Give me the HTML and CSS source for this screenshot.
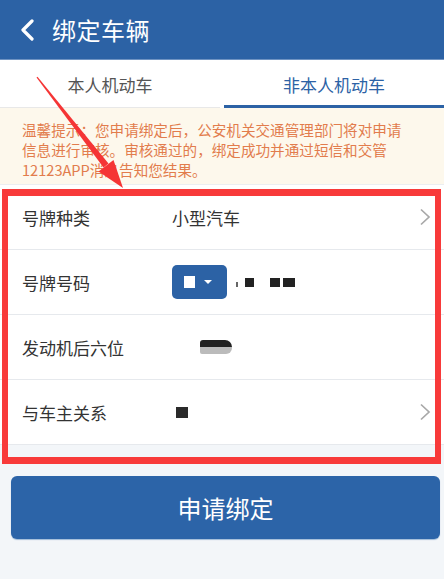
FILE: index.html
```html
<!DOCTYPE html>
<html lang="zh-CN">
<head>
<meta charset="utf-8">
<title>绑定车辆</title>
<link rel="stylesheet" href="styles.css">
</head>
<body>
<div class="page">
  <header class="topbar">
    <svg class="back" width="16" height="22" viewBox="0 0 16 22"><path d="M13 2 L4 11 L13 20" fill="none" stroke="#fff" stroke-width="3.2" stroke-linecap="round" stroke-linejoin="round"/></svg>
    <h1 class="title">绑定车辆</h1>
  </header>
  <nav class="tabs">
    <div class="tab">本人机动车</div>
    <div class="tab active">非本人机动车</div>
  </nav>
  <div class="notice">温馨提示：您申请绑定后，公安机关交通管理部门将对申请信息进行审核。审核通过的，绑定成功并通过短信和交管12123APP消息告知您结果。</div>
  <div class="form">
    <div class="row">
      <span class="label">号牌种类</span>
      <span class="value">小型汽车</span>
      <svg class="chev" width="12" height="18" viewBox="0 0 12 18"><path d="M2 1.5 L10 9 L2 16.5" fill="none" stroke="#a8a8a8" stroke-width="1.7"/></svg>
    </div>
    <div class="row">
      <span class="label">号牌号码</span>
      <span class="value plate-val">
        <span class="plate"><span class="plate-sq"></span><span class="caret"></span></span>
        <span class="mask m0"></span><span class="mask m1"></span><span class="mask m2"></span><span class="mask m3"></span>
      </span>
    </div>
    <div class="row">
      <span class="label">发动机后六位</span>
      <span class="value"><span class="blob"></span></span>
    </div>
    <div class="row">
      <span class="label">与车主关系</span>
      <span class="value"><span class="mask m4"></span></span>
      <svg class="chev" width="12" height="18" viewBox="0 0 12 18"><path d="M2 1.5 L10 9 L2 16.5" fill="none" stroke="#a8a8a8" stroke-width="1.7"/></svg>
    </div>
  </div>
  <div class="actions">
    <button class="submit">申请绑定</button>
  </div>
  <div class="redbox"></div>
  <svg class="arrow" width="444" height="579" viewBox="0 0 444 579">
    <polygon points="36.5,77.5 37.5,76.8 108.5,163.5 103.5,167.5" fill="#f53535"/>
    <polygon points="123,188 98.5,171.5 113.5,160" fill="#f53535"/>
  </svg>
</div>
</body>
</html>
```

FILE: styles.css
```css
* { box-sizing: border-box; margin: 0; padding: 0; }
html, body { width: 444px; height: 579px; overflow: hidden; }
body {
  background: #f3f6f9;
  font-family: "Noto Sans CJK SC", "Noto Sans", sans-serif;
}
.page { position: relative; width: 444px; height: 579px; }
.topbar {
  height: 60px;
  background: #2c62a5;
  display: flex;
  align-items: center;
  padding-left: 19px;
  border-bottom: 1px solid #6f93c2;
}
.back { margin-right: 17px; margin-top: 1px; }
.title {
  color: #fff;
  font-size: 24px;
  font-weight: 400;
  letter-spacing: 0.5px;
}
.tabs {
  display: flex;
  background: #fff;
  height: 48px;
}
.tab {
  flex: 1;
  display: flex;
  align-items: center;
  justify-content: center;
  font-size: 17px;
  color: #555;
  padding-top: 1px;
  border-bottom: 1px solid #e8e8e8;
}
.tab.active {
  color: #2c62a5;
  border-bottom: 3px solid #2c62a5;
  margin-left: 4px;
  padding-top: 3px;
}
.notice {
  background: #fdf8ec;
  color: #e27c4c;
  font-size: 14.6px;
  line-height: 20px;
  padding: 12px 30px 9px 22px;
  height: 77px;
  border-bottom: 1px solid #eceef0;
}
.form { background: #fff; }
.row {
  height: 65px;
  display: flex;
  align-items: center;
  padding: 0 13px 0 22px;
  border-bottom: 1px solid #e6e9ed;
}
.label {
  width: 150px;
  font-size: 17px;
  color: #333;
}
.value {
  flex: 1;
  font-size: 17px;
  color: #333;
  display: flex;
  align-items: center;
}
.plate {
  width: 55px;
  height: 34px;
  background: #2c62a5;
  border-radius: 5px;
  display: flex;
  align-items: center;
  padding-left: 12px;
  margin-right: 9px;
}
.plate-sq { width: 11px; height: 12px; background: #fff; margin-right: 9px; }
.caret {
  width: 0; height: 0;
  border-left: 4px solid transparent;
  border-right: 4px solid transparent;
  border-top: 4px solid #fff;
}
.mask { display: inline-block; background: #222; height: 9px; }
.m0 { width: 2px; height: 5px; margin-right: 7px; margin-top: 4px; background: #666; }
.m1 { width: 9px; margin-right: 16px; }
.m2 { width: 10px; margin-right: 3px; }
.m3 { width: 12px; }
.m4 { width: 12px; height: 11px; margin-left: 4px; background: #2a2a2a; }
.blob {
  display: inline-block;
  width: 32px;
  height: 14px;
  margin-left: 28px;
  background: linear-gradient(#222 0 50%, #bbb 50% 100%);
  border-radius: 3px 7px 6px 2px;
}
.actions { padding: 31px 4px 0 11px; }
.submit {
  width: 100%;
  height: 63px;
  border: none;
  border-radius: 6px;
  background: #2c64a8;
  color: #fff;
  font-family: "Noto Sans CJK SC", "Noto Sans", sans-serif;
  font-size: 24px;
  box-shadow: 0 1px 1px #9fbbd8;
}
.redbox {
  position: absolute;
  left: 2px;
  top: 189px;
  width: 439px;
  height: 275px;
  border: 7px solid #f83a3a;
  border-left-width: 6px;
  border-right-width: 6px;
  pointer-events: none;
}
.arrow { position: absolute; left: 0; top: 0; pointer-events: none; }
```
